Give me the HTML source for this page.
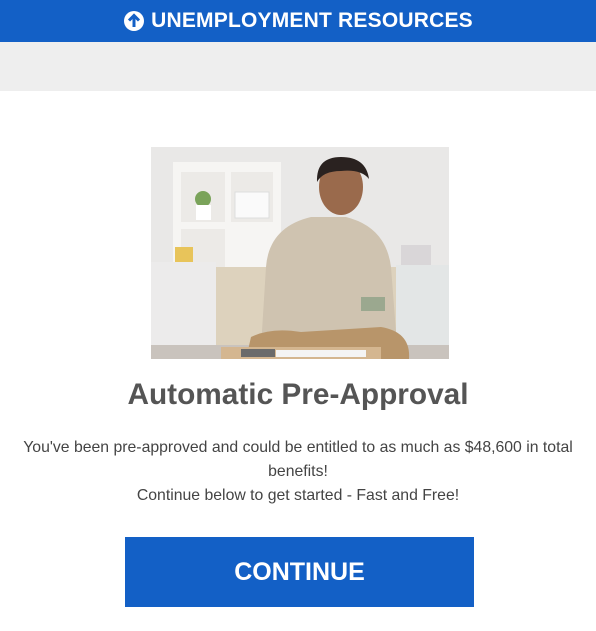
<!DOCTYPE html>
<html><head><meta charset="utf-8"><style>
body{margin:0;width:596px;height:631px;background:#fff;font-family:"Liberation Sans",sans-serif;overflow:hidden;position:relative}
.hdr{position:absolute;left:0;top:0;width:596px;height:42px;background:#1360c6;color:#fff;font-weight:bold;font-size:21px;display:flex;align-items:center;justify-content:center;letter-spacing:0.2px}
.hdr svg{margin-right:6px}
.band{position:absolute;left:0;top:42px;width:596px;height:49px;background:#eeeeee}
.photo{position:absolute;left:151px;top:147px;width:298px;height:212px;overflow:hidden;background:#ecebea}
h1{position:absolute;left:0;width:596px;top:378px;margin:0;text-align:center;font-size:29.8px;color:#555;font-weight:bold}
.txt{position:absolute;left:18px;width:560px;top:436px;text-align:center;font-size:15.8px;color:#444;line-height:24px}
.btn{position:absolute;left:125px;top:537px;width:349px;height:70px;background:#1360c6;color:#fff;font-weight:bold;font-size:25px;display:flex;align-items:center;justify-content:center}
</style></head><body>
<div class="hdr"><svg width="22" height="22" viewBox="0 0 22 22"><circle cx="11" cy="11" r="10" fill="#fff"/><path d="M11 17V6M6 10.5L11 5.5L16 10.5" stroke="#1360c6" stroke-width="3" fill="none"/></svg>UNEMPLOYMENT RESOURCES</div>
<div class="band"></div>
<div class="photo">
<svg width="298" height="212" viewBox="0 0 298 212">
<rect width="298" height="212" fill="#e9e8e7"/>
<rect x="22" y="15" width="108" height="110" fill="#f6f5f3"/>
<rect x="30" y="25" width="44" height="50" fill="#eceae7"/>
<rect x="80" y="25" width="42" height="50" fill="#eceae7"/>
<rect x="30" y="82" width="44" height="38" fill="#eceae7"/>
<circle cx="52" cy="52" r="8" fill="#7aa35a"/><rect x="45" y="58" width="15" height="15" fill="#fff"/>
<rect x="84" y="45" width="34" height="26" fill="#fafafa" stroke="#ddd"/>
<rect x="24" y="100" width="18" height="16" fill="#e8c45a"/>
<rect x="250" y="98" width="30" height="20" fill="#d9d6d8"/>
<rect x="60" y="120" width="238" height="80" fill="#ddd2bd"/>
<rect x="0" y="115" width="65" height="85" fill="#ecebeb"/>
<rect x="245" y="118" width="53" height="85" fill="#e3e6e6"/>
<rect x="0" y="198" width="298" height="14" fill="#c9c3bd"/>
<path d="M110 200 L115 120 Q118 80 160 70 L195 70 Q235 80 240 120 L245 185 L110 200Z" fill="#cfc3b0"/>
<path d="M95 212 L100 190 Q120 180 150 185 L230 180 Q260 185 258 212Z" fill="#b8956a"/>
<ellipse cx="190" cy="40" rx="22" ry="28" fill="#9a6a4c"/>
<path d="M166 35 Q165 10 190 10 Q215 10 218 32 Q210 22 190 24 Q172 24 166 35Z" fill="#2a2220"/>
<rect x="210" y="150" width="24" height="14" fill="#9ba88f"/>
<rect x="70" y="200" width="160" height="12" fill="#d4b690"/>
<rect x="90" y="202" width="34" height="8" fill="#6b6b6b"/>
<rect x="125" y="203" width="90" height="7" fill="#f4f4f4"/>
</svg></div>
<h1>Automatic Pre-Approval</h1>
<div class="txt">You've been pre-approved and could be entitled to as much as $48,600 in total benefits!<br>Continue below to get started - Fast and Free!</div>
<div class="btn">CONTINUE</div>
</body></html>
